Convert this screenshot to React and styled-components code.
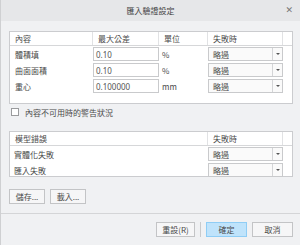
import styled, { createGlobalStyle } from "styled-components";

const Global = createGlobalStyle`
  html, body {
    margin: 0;
    padding: 0;
    background: #f0f1f3;
  }
  body {
    font-family: "Noto Sans CJK TC", "Noto Sans", "Liberation Sans", sans-serif;
    font-size: 8px;
    color: #4a4a4a;
  }
`;

const Dialog = styled.div`
  width: 300px;
  height: 245px;
  box-sizing: border-box;
  border-left: 1px solid #cfd0d2;
  display: flex;
  flex-direction: column;
  background: #f0f1f3;
`;

const TitleBar = styled.div`
  height: 21px;
  flex: none;
  position: relative;
  display: flex;
  align-items: center;
  justify-content: center;
  background: #e6e7e9;
  color: #444;
  font-size: 8px;
`;

const Close = styled.span`
  position: absolute;
  right: 7px;
  top: 5px;
  font-size: 9px;
  color: #777;
  font-family: "DejaVu Sans", sans-serif;
`;

const Body = styled.div`
  padding: 10px 7px 0 8px;
  display: flex;
  flex-direction: column;
`;

const Table = styled.div`
  border: 1px solid #cbcccf;
  background: #fff;
  height: ${(p) => p.$h}px;
  box-sizing: border-box;
`;

const Row = styled.div`
  display: grid;
  grid-template-columns: ${(p) => p.$cols};
  height: ${(p) => p.$h || 16}px;
  align-items: center;
`;

const HeadRow = styled(Row)`
  height: 13px;
  border-bottom: 1px solid #d6d7d9;
  align-items: stretch;
`;

const HeadCell = styled.div`
  display: flex;
  align-items: center;
  padding-left: 5px;
  border-right: ${(p) => (p.$last ? "none" : "1px solid #e1e2e4")};
  color: #4a4a4a;
`;

const Cell = styled.div`
  padding-left: ${(p) => p.$pad ?? 5}px;
  color: #4a4a4a;
  white-space: nowrap;
`;

const Input = styled.div`
  height: 14px;
  box-sizing: border-box;
  border: 1px solid #c9cacc;
  background: #fff;
  padding-left: 2px;
  display: flex;
  align-items: center;
  font-family: "Noto Sans", "Liberation Sans", sans-serif;
  font-size: 8px;
  color: #555;
`;

const Combo = styled.div`
  height: 14px;
  box-sizing: border-box;
  border: 1px solid #c9cacc;
  background: #fafafa;
  display: grid;
  grid-template-columns: 1fr 10px;
  align-items: stretch;
`;

const ComboText = styled.span`
  display: flex;
  align-items: center;
  padding-left: 4px;
  color: #4a4a4a;
`;

const ComboArrow = styled.span`
  border-left: 1px solid #d4d5d7;
  display: flex;
  align-items: center;
  justify-content: center;
  &::after {
    content: "";
    border-left: 2px solid transparent;
    border-right: 2px solid transparent;
    border-top: 2px solid #555;
  }
`;

const CheckLine = styled.label`
  display: flex;
  align-items: center;
  gap: 6px;
  margin: 4px 0 0 2px;
  height: 8px;
  color: #4a4a4a;
`;

const Box = styled.span`
  width: 8px;
  height: 8px;
  box-sizing: border-box;
  border: 1px solid #9a9b9d;
  background: #fff;
`;

const Spacer = styled.div`
  height: ${(p) => p.$h}px;
`;

const ButtonRow = styled.div`
  display: flex;
  gap: 5px;
  margin-top: ${(p) => p.$mt}px;
`;

const Button = styled.div`
  height: 15px;
  width: ${(p) => p.$w}px;
  box-sizing: border-box;
  border: 1px solid ${(p) => (p.$primary ? "#8fcdf5" : "#c3c4c6")};
  background: ${(p) => (p.$primary ? "#bfe3fb" : "#f6f6f7")};
  display: flex;
  align-items: center;
  justify-content: center;
  color: #4a4a4a;
  font-size: 8px;
`;

const Footer = styled.div`
  margin-top: 9px;
  border-top: 1px solid #d4d5d7;
  padding: 8px 7px 0 0;
  display: flex;
  justify-content: flex-end;
  align-items: center;
  gap: 5px;
`;

const VSep = styled.span`
  width: 1px;
  height: 15px;
  background: #c9cacc;
`;

const cols1 = "83px 66px 49px 75px 10px";
const cols2 = "198px 75px 10px";

const rows = [
  { name: "體積填", value: "0.10", unit: "%" },
  { name: "曲面面積", value: "0.10", unit: "%" },
  { name: "重心", value: "0.100000", unit: "mm" },
];

export default function App() {
  return (
    <>
      <Global />
      <Dialog>
        <TitleBar>
          匯入驗證設定
          <Close>✕</Close>
        </TitleBar>
        <Body>
          <Table $h={73}>
            <HeadRow $cols={cols1}>
              <HeadCell>內容</HeadCell>
              <HeadCell>最大公差</HeadCell>
              <HeadCell>單位</HeadCell>
              <HeadCell>失敗時</HeadCell>
              <HeadCell $last />
            </HeadRow>
            {rows.map((r) => (
              <Row key={r.name} $cols={cols1}>
                <Cell>{r.name}</Cell>
                <Input>{r.value}</Input>
                <Cell $pad={3}>{r.unit}</Cell>
                <Combo>
                  <ComboText>略過</ComboText>
                  <ComboArrow />
                </Combo>
                <span />
              </Row>
            ))}
          </Table>
          <CheckLine>
            <Box />
            內容不可用時的警告狀況
          </CheckLine>
          <Spacer $h={15} />
          <Table $h={46}>
            <HeadRow $cols={cols2}>
              <HeadCell>模型錯誤</HeadCell>
              <HeadCell>失敗時</HeadCell>
              <HeadCell $last />
            </HeadRow>
            {["實體化失敗", "匯入失敗"].map((n) => (
              <Row key={n} $cols={cols2}>
                <Cell $pad={4}>{n}</Cell>
                <Combo>
                  <ComboText>略過</ComboText>
                  <ComboArrow />
                </Combo>
                <span />
              </Row>
            ))}
          </Table>
          <ButtonRow $mt={12}>
            <Button $w={36}>儲存...</Button>
            <Button $w={36}>載入...</Button>
          </ButtonRow>
        </Body>
        <Footer>
          <Button $w={39}>重設(R)</Button>
          <VSep />
          <Button $w={41} $primary>
            確定
          </Button>
          <Button $w={41}>取消</Button>
        </Footer>
      </Dialog>
    </>
  );
}
